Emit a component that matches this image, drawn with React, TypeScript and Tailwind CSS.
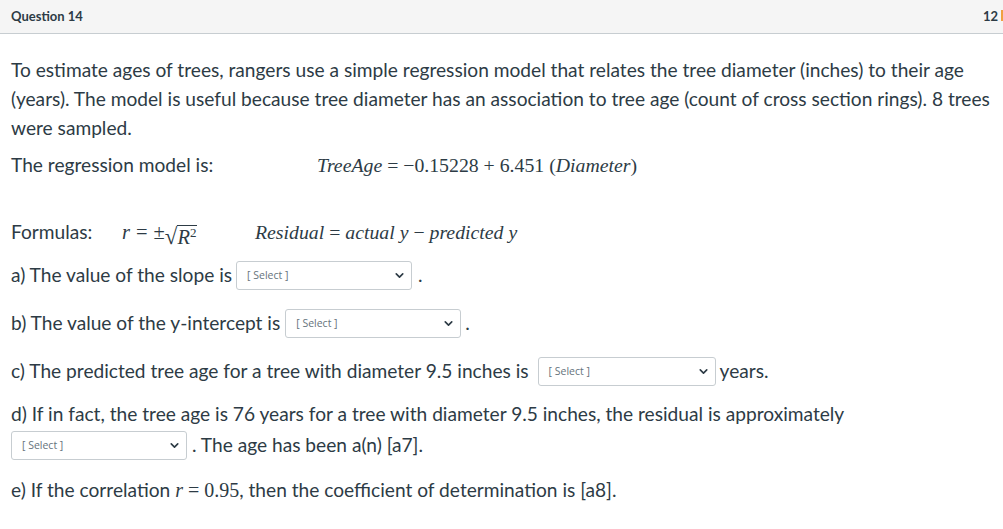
import { ChevronDown } from "lucide-react";

const math = "font-['Liberation_Serif','DejaVu_Serif',serif]";

function Dropdown({ width }: { width: string }) {
  return (
    <span
      className={`inline-flex h-[29px] ${width} shrink-0 items-center justify-between rounded-[3px] border border-[#c7cdd1] bg-white pl-[10px] pr-[5px]`}
    >
      <span className="font-['Open_Sans',sans-serif] text-[10.5px] text-[#66737c]">[ Select ]</span>
      <ChevronDown className="size-[13px] text-[#2d3b45]" strokeWidth={3} />
    </span>
  );
}

function Row({ className, children }: { className?: string; children: React.ReactNode }) {
  return <div className={`flex h-[29px] items-center whitespace-nowrap ${className ?? ""}`}>{children}</div>;
}

export default function App() {
  return (
    <div className="h-[529px] w-[1003px] overflow-hidden bg-white font-['Lato',sans-serif] text-[#2d3b45]">
      <div className="relative flex h-[34px] items-center justify-between border-b border-[#c7cdd1] bg-[#f5f5f5] pl-[11px]">
        <span className="text-[13px] font-bold">Question 14</span>
        <span className="mr-[5px] text-[13px] font-bold">12</span>
        <span className="absolute right-0 top-[10px] h-[11px] w-[2px] bg-[#f0a040]" />
      </div>

      <div className="pl-[11px] pr-[2px] text-[19.15px]">
        <p className="mt-[21px] leading-[29px]">
          To estimate ages of trees, rangers use a simple regression model that relates the tree diameter (inches) to their age
          (years). The model is useful because tree diameter has an association to tree age (count of cross section rings). 8 trees
          were sampled.
        </p>

        <Row className="mt-[9px]">
          <span className="w-[306px]">The regression model is:</span>
          <span className={`${math} text-[19.8px]`}>
            <i>TreeAge</i> = −0.15228 + 6.451 (<i>Diameter</i>)
          </span>
        </Row>

        <Row className="mt-[38px]">
          <span className="w-[111px]">Formulas:</span>
          <span className={`${math} flex w-[133px] items-end text-[20.5px]`}>
            <i>r</i>
            <span className="mx-[6px]">=</span>
            <span>±</span>
            <span className="text-[23px] leading-none">√</span>
            <span className="border-t border-[#2d3b45] pr-[1px] leading-[22px]">
              <i>R</i>
              <sup className="text-[13px]">2</sup>
            </span>
          </span>
          <span className={`${math} text-[19.8px]`}>
            <i>Residual</i> = <i>actual y</i> − <i>predicted y</i>
          </span>
        </Row>

        <Row className="mt-[14px]">
          <span className="mr-[4px]">a) The value of the slope is</span>
          <Dropdown width="w-[176px]" />
          <span className="ml-[6px]">.</span>
        </Row>

        <Row className="mt-[19px]">
          <span className="mr-[5px]">b) The value of the y-intercept is</span>
          <Dropdown width="w-[176px]" />
          <span className="ml-[4px]">.</span>
        </Row>

        <Row className="mt-[19px]">
          <span className="mr-[9px]">c) The predicted tree age for a tree with diameter 9.5 inches is</span>
          <Dropdown width="w-[178px]" />
          <span className="ml-[4px]">years.</span>
        </Row>

        <Row className="mt-[14px]">
          <span>d) If in fact, the tree age is 76 years for a tree with diameter 9.5 inches, the residual is approximately</span>
        </Row>
        <Row className="mt-[2px]">
          <Dropdown width="w-[176px]" />
          <span className="ml-[5px]">. The age has been a(n) [a7].</span>
        </Row>

        <Row className="mt-[15px]">
          <span>
            e) If the correlation{" "}
            <span className={`${math} text-[20px]`}>
              <i>r</i> = 0.95
            </span>
            , then the coefficient of determination is [a8].
          </span>
        </Row>
      </div>
    </div>
  );
}
